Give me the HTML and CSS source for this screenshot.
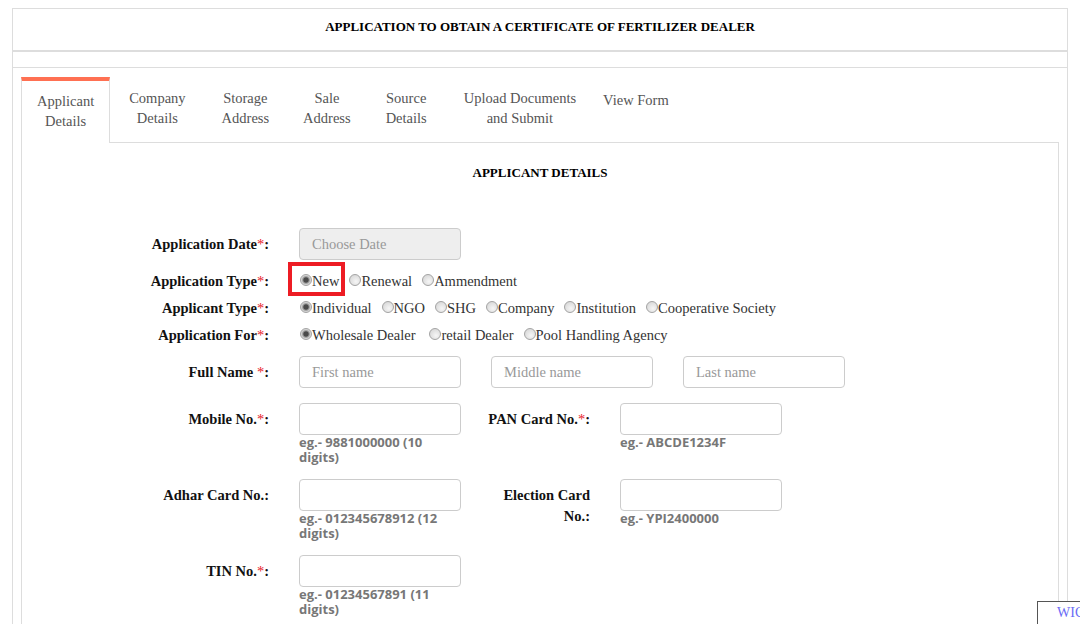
FILE: index.html
```html
<!DOCTYPE html>
<html>
<head>
<meta charset="utf-8">
<link rel="stylesheet" href="styles.css">
</head>
<body>
<div class="page">
  <div class="title">APPLICATION TO OBTAIN A CERTIFICATE OF FERTILIZER DEALER</div>
  <div class="strip"></div>
  <div class="tabwrap">
    <ul class="tabs">
      <li class="tab active">Applicant<br>Details</li>
      <li class="tab">Company<br>Details</li>
      <li class="tab">Storage<br>Address</li>
      <li class="tab tab-sale">Sale<br>Address</li>
      <li class="tab">Source<br>Details</li>
      <li class="tab tab-upload">Upload Documents<br>and Submit</li>
      <li class="tab single">View Form</li>
    </ul>
    <div class="panel">
      <h3 class="section">APPLICANT DETAILS</h3>
      <div class="form">
        <div class="row row-date">
          <label class="lbl">Application Date<span class="req">*</span>:</label>
          <div class="field"><input class="inp inp-date" placeholder="Choose Date" readonly></div>
        </div>
        <div class="row row-radio">
          <label class="lbl lbl-radio">Application Type<span class="req">*</span>:</label>
          <div class="radios">
            <span class="opt opt-mark"><input type="radio" name="at" checked>New</span>
            <span class="opt"><input type="radio" name="at">Renewal</span>
            <span class="opt"><input type="radio" name="at">Ammendment</span>
          </div>
        </div>
        <div class="row row-radio">
          <label class="lbl lbl-radio">Applicant Type<span class="req">*</span>:</label>
          <div class="radios">
            <span class="opt"><input type="radio" name="apt" checked>Individual</span>
            <span class="opt"><input type="radio" name="apt">NGO</span>
            <span class="opt"><input type="radio" name="apt">SHG</span>
            <span class="opt"><input type="radio" name="apt">Company</span>
            <span class="opt"><input type="radio" name="apt">Institution</span>
            <span class="opt"><input type="radio" name="apt">Cooperative Society</span>
          </div>
        </div>
        <div class="row row-radio">
          <label class="lbl lbl-radio">Application For<span class="req">*</span>:</label>
          <div class="radios">
            <span class="opt opt-wide"><input type="radio" name="af" checked>Wholesale Dealer</span>
            <span class="opt"><input type="radio" name="af">retail Dealer</span>
            <span class="opt"><input type="radio" name="af">Pool Handling Agency</span>
          </div>
        </div>
        <div class="row row-name">
          <label class="lbl">Full Name <span class="req">*</span>:</label>
          <div class="names">
            <input class="inp" placeholder="First name">
            <input class="inp" placeholder="Middle name">
            <input class="inp" placeholder="Last name">
          </div>
        </div>
        <div class="row row-input">
          <label class="lbl">Mobile No.<span class="req">*</span>:</label>
          <div class="field">
            <input class="inp">
            <div class="hint">eg.- 9881000000 (10 digits)</div>
          </div>
          <label class="lbl lbl2">PAN Card No.<span class="req">*</span>:</label>
          <div class="field">
            <input class="inp">
            <div class="hint">eg.- ABCDE1234F</div>
          </div>
        </div>
        <div class="row row-input">
          <label class="lbl">Adhar Card No.:</label>
          <div class="field">
            <input class="inp">
            <div class="hint">eg.- 012345678912 (12 digits)</div>
          </div>
          <label class="lbl lbl2">Election Card No.:</label>
          <div class="field">
            <input class="inp">
            <div class="hint">eg.- YPI2400000</div>
          </div>
        </div>
        <div class="row row-input">
          <label class="lbl">TIN No.<span class="req">*</span>:</label>
          <div class="field">
            <input class="inp">
            <div class="hint">eg.- 01234567891 (11 digits)</div>
          </div>
        </div>
      </div>
    </div>
  </div>
</div>
<div class="wic">WIC</div>
</body>
</html>
```

FILE: styles.css
```css
*, *::before, *::after { box-sizing: border-box; }
html, body { margin: 0; padding: 0; background: #fff; }
body {
  font-family: "Liberation Serif", "Times New Roman", serif;
  font-size: 14.5px;
  color: #333;
}
.page {
  margin: 8px 12px 0;
  border: 1px solid #ddd;
  border-bottom: none;
  min-height: 700px;
}
.title {
  font-weight: bold;
  font-size: 13px;
  color: #000;
  text-align: center;
  line-height: 20px;
  padding: 8px 0 13px;
  border-bottom: 2px solid #ddd;
}
.strip {
  height: 16px;
  border-bottom: 1px solid #ddd;
}
.tabwrap {
  padding: 9px 8px 0 8px;
}
.tabs {
  list-style: none;
  margin: 0;
  padding: 0;
  display: flex;
  align-items: flex-start;
}
.tab {
  color: #555;
  font-size: 14.5px;
  line-height: 20px;
  text-align: center;
  padding: 11px 17px 0;
  margin-right: 2px;
}
.tab-sale { padding-right: 16px; padding-left: 15px; }
.tab-upload { padding-left: 18px; }
.tab.active {
  border: 1px solid #ddd;
  border-top: 4px solid #ff7052;
  border-bottom: none;
  background: #fff;
  height: 66px;
  margin-bottom: -1px;
  padding: 10px 15px 0;
  position: relative;
  z-index: 1;
}
.tab.single { padding-top: 13px; padding-left: 8px; }
.panel {
  border: 1px solid #ddd;
  border-bottom: none;
  min-height: 600px;
}
.section {
  margin: 20px 0 0;
  font-size: 13px;
  line-height: 20px;
  font-weight: bold;
  color: #000;
  text-align: center;
}
.form {
  margin-top: 45px;
}
.row {
  display: flex;
  align-items: flex-start;
}
.lbl {
  width: 247px;
  flex: none;
  text-align: right;
  font-weight: bold;
  color: #111;
  font-size: 14.5px;
  padding-top: 6px;
  line-height: 21px;
  margin-right: 30px;
}
.lbl2 {
  width: 106px;
  margin-left: 23px;
}
.req { color: #e8202a; font-weight: normal; }
.row-date { margin-bottom: 7px; }
.row-radio { height: 27px; }
.lbl-radio { padding-top: 1px; line-height: 27px; }
.radios {
  display: flex;
  align-items: center;
  height: 27px;
  padding-top: 2px;
  color: #333;
}
.opt {
  display: inline-flex;
  align-items: center;
  height: 27px;
  margin-right: 9px;
  position: relative;
}
.opt-wide { margin-right: 13px; }
.opt input[type=radio] {
  -webkit-appearance: none;
  appearance: none;
  width: 12px;
  height: 12px;
  margin: 0 0 4px 1px;
  border: 1px solid #a3a3a3;
  border-radius: 50%;
  background: radial-gradient(circle at 60% 65%, #f6f6f6 0, #dcdcdc 70%, #cfcfcf 100%);
}
.opt input[type=radio]:checked {
  background: radial-gradient(circle, #4a4a4a 0 2.2px, #8c8c8c 3px, #d4d4d4 4.5px, #e6e6e6 100%);
}
.opt-mark::after {
  content: "";
  position: absolute;
  left: -11px;
  top: -6px;
  width: 57px;
  height: 34px;
  border: 4px solid #ed1c24;
}
.row-name { margin-top: 8px; }
.names {
  display: flex;
  gap: 30px;
}
.inp {
  width: 162px;
  height: 32px;
  border: 1px solid #ccc;
  border-radius: 4px;
  padding: 6px 12px;
  font-family: "Liberation Serif", "Times New Roman", serif;
  font-size: 14.5px;
  color: #555;
  background: #fff;
  display: block;
  outline: none;
}
.inp::placeholder { color: #999; }
.inp-date { background: #eee; }
.field { width: 162px; flex: none; }
.row-input { margin-top: 15px; }
.row-input + .row-input { margin-top: 14px; }
.hint {
  font-family: "Open Sans", "Liberation Sans", sans-serif;
  font-weight: bold;
  font-size: 13px;
  line-height: 15px;
  color: #777;
}
.wic {
  position: fixed;
  left: 1037px;
  top: 601px;
  width: 120px;
  height: 40px;
  border: 1px solid #555;
  background: #fff;
  color: #6b6bf5;
  font-size: 14px;
  padding: 3px 0 0 19px;
}
```
